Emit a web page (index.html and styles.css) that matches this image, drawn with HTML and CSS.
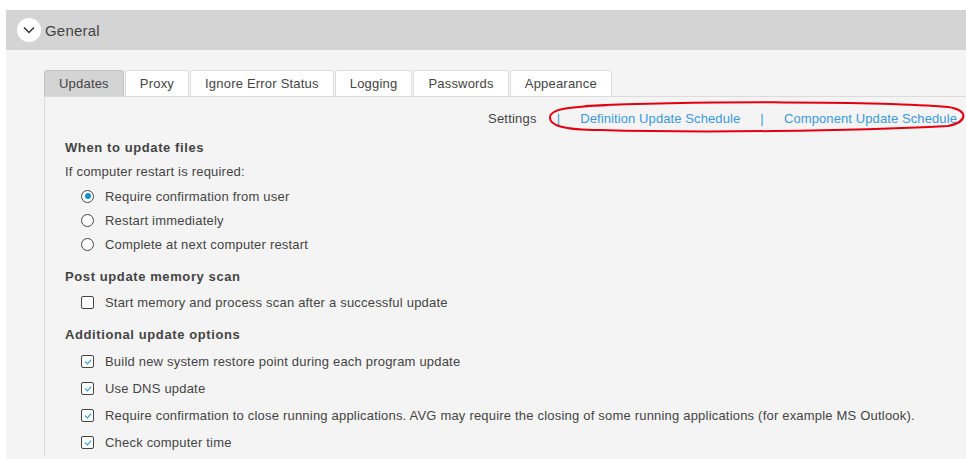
FILE: index.html
```html
<!doctype html>
<html lang="en">
  <head>
    <meta charset="UTF-8" />
    <title>General settings</title>
    <link rel="stylesheet" href="styles.css">
  </head>

  <body>
    <div class="panel">
      <!-- Header -->
      <div class="panel-header">
        <span class="toggle">
          <svg width="14" height="14" viewBox="0 0 14 14">
            <path d="M2 4.5 L7 9.5 L12 4.5" fill="none" stroke="#333" stroke-width="1.5" />
          </svg>
        </span>
        <span class="panel-title">General</span>
      </div>

      <div class="panel-body">
        <!-- Tabs -->
        <div class="tabs">
          <div class="tab active">Updates</div>
          <div class="tab">Proxy</div>
          <div class="tab">Ignore Error Status</div>
          <div class="tab">Logging</div>
          <div class="tab">Passwords</div>
          <div class="tab">Appearance</div>
        </div>

        <div class="tab-content">
          <div class="links">
            <span>Settings</span>
            <span class="sep">|</span>
            <a href="#">Definition Update Schedule</a>
            <span class="sep">|</span>
            <a href="#">Component Update Schedule</a>
          </div>

          <div class="group first">
            <h3 class="group-title">When to update files</h3>
            <div class="group-note">If computer restart is required:</div>
            <label class="option"><span class="radio checked"></span>Require confirmation from user</label>
            <label class="option"><span class="radio"></span>Restart immediately</label>
            <label class="option"><span class="radio"></span>Complete at next computer restart</label>
          </div>

          <div class="group">
            <h3 class="group-title">Post update memory scan</h3>
            <label class="option check-row"><span class="check"></span>Start memory and process scan after a successful update</label>
          </div>

          <div class="group last">
            <h3 class="group-title">Additional update options</h3>
            <label class="option check-row"><span class="check checked"></span>Build new system restore point during each program update</label>
            <label class="option check-row"><span class="check checked"></span>Use DNS update</label>
            <label class="option check-row"><span class="check checked"></span>Require confirmation to close running applications. AVG may require the closing of some running applications (for example MS Outlook).</label>
            <label class="option check-row"><span class="check checked"></span>Check computer time</label>
          </div>
        </div>
      </div>
    </div>

    <!-- hand-drawn marker around the schedule links -->
    <svg class="marker" width="966" height="459" viewBox="0 0 966 459">
      <path d="M585 106 C 700 101 880 101 948 107 C 969 110 968 122 948 126 C 850 131 700 133 600 130 C 562 130 549 125 550 117 C 551 109 566 107 610 105"
        fill="none" stroke="#e3000f" stroke-width="2" />
    </svg>
  </body>
</html>
```

FILE: styles.css
```css
body {
  margin: 0;
  padding: 10px 0 0 6px;
  background-color: #fff;
  font-family: "Liberation Sans", Arial, sans-serif;
  font-size: 13px;
  letter-spacing: 0.2px;
  color: #444;
  overflow: hidden;
}

.panel {
  background-color: #f4f4f4;
  min-height: 460px;
}

.panel-header {
  display: flex;
  align-items: center;
  height: 40px;
  padding-left: 11px;
  background-color: #d4d4d4;
}

.toggle {
  display: flex;
  align-items: center;
  justify-content: center;
  width: 24px;
  height: 24px;
  border-radius: 50%;
  background-color: #fff;
}

.panel-title {
  margin-left: 4px;
  font-size: 15px;
  color: #444;
}

.panel-body {
  padding: 20px 0 0 38px;
}

.tabs {
  display: flex;
  gap: 1px;
}

.tab {
  height: 25px;
  line-height: 25px;
  padding: 0 14px;
  border: 1px solid #dcdcdc;
  border-bottom: none;
  border-radius: 3px 3px 0 0;
  background-color: #fff;
  color: #444;
}

.tab.active {
  background-color: #d4d4d4;
  border-color: #c4c4c4;
}

.tab-content {
  border-top: 1px solid #dcdcdc;
  border-left: 1px solid #dcdcdc;
  padding-left: 20px;
}

.links {
  display: flex;
  justify-content: flex-end;
  align-items: center;
  gap: 20px;
  height: 20px;
  margin-top: 11px;
  padding-right: 9px;
}

.links a {
  color: #3a9ad9;
  letter-spacing: 0.1px;
  text-decoration: none;
}

.links .sep {
  color: #3a9ad9;
}

.group {
  margin-top: 9px;
}

.group.first {
  margin-top: 8px;
}

.group.last {
  margin-top: 7px;
}

.group-title {
  margin: 0;
  font-size: 13px;
  letter-spacing: 0.6px;
  line-height: 24px;
  font-weight: bold;
  color: #444;
}

.group.last .group-title {
  margin-bottom: 1px;
}

.group-note {
  line-height: 24px;
}

.option {
  display: flex;
  align-items: center;
  height: 24px;
  padding-left: 16px;
}

.option.check-row {
  height: 27px;
}

.radio {
  width: 11px;
  height: 11px;
  margin-right: 11px;
  border: 1px solid #444;
  border-radius: 50%;
  background-color: #fff;
  position: relative;
}

.radio.checked::after {
  content: "";
  position: absolute;
  left: 2.5px;
  top: 2.5px;
  width: 6px;
  height: 6px;
  border-radius: 50%;
  background-color: #1a8fd0;
}

.check {
  width: 11px;
  height: 11px;
  margin-right: 11px;
  border: 1px solid #444;
  border-radius: 2px;
  background-color: #fff;
  position: relative;
}

.check.checked::after {
  content: "";
  position: absolute;
  left: 3.5px;
  top: 1.5px;
  width: 3px;
  height: 5px;
  border-right: 1.5px solid #1a8fd0;
  border-bottom: 1.5px solid #1a8fd0;
  transform: rotate(40deg);
}

.marker {
  position: absolute;
  left: 0;
  top: 0;
  pointer-events: none;
}
```
